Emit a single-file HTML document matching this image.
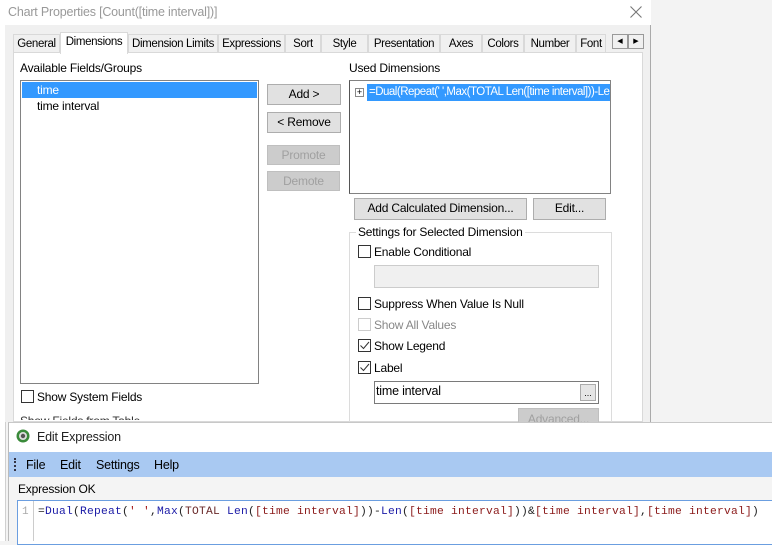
<!DOCTYPE html>
<html><head><meta charset="utf-8"><style>
*{box-sizing:border-box;margin:0;padding:0}
body{width:772px;height:541px;overflow:hidden;background:#f3f3f3;font-family:"Liberation Sans",sans-serif;font-size:12px;color:#000;position:relative}
.a{position:absolute}
.btn{position:absolute;background:#e1e1e1;border:1px solid #adadad;text-align:center;line-height:19px;font-size:12px;letter-spacing:-0.2px;white-space:nowrap}
.dis{color:#a0a0a0;background:#cccccc;border-color:#bfbfbf}
.cb{position:absolute;width:13px;height:13px;border:1px solid #333;background:#fff}
.tab{position:absolute;top:34px;height:19px;border:1px solid #d9d9d9;border-bottom:none;background:#f0f0f0;line-height:18px;text-align:center;font-size:11.5px;letter-spacing:-0.35px;white-space:nowrap;overflow:hidden}
.lbl{position:absolute;font-size:12px;white-space:nowrap;letter-spacing:-0.2px}
</style></head><body>
<div class="a" style="left:0;top:0;width:6px;height:541px;background:#fff;border-right:1px solid #d0d0d0"></div>
<div class="a" style="left:5px;top:0;width:646px;height:422px;background:#f0f0f0;border-right:1px solid #aaa"></div>
<div class="a" style="left:5px;top:0;width:646px;height:25px;background:#fff"></div>
<div class="lbl" style="left:8px;top:5px;color:#999;font-size:12.5px">Chart Properties [Count([time interval])]</div>
<svg class="a" style="left:630px;top:6px" width="12" height="12"><path d="M0.5 0.5L11.5 11.5M11.5 0.5L0.5 11.5" stroke="#777" stroke-width="1.1"/></svg>
<div class="tab" style="left:13px;width:47px">General</div>
<div class="tab" style="left:128px;width:90px">Dimension Limits</div>
<div class="tab" style="left:218px;width:67px">Expressions</div>
<div class="tab" style="left:285px;width:36px">Sort</div>
<div class="tab" style="left:321px;width:47px">Style</div>
<div class="tab" style="left:368px;width:72px">Presentation</div>
<div class="tab" style="left:440px;width:42px">Axes</div>
<div class="tab" style="left:482px;width:42px">Colors</div>
<div class="tab" style="left:524px;width:52px">Number</div>
<div class="tab" style="left:576px;width:30px">Font</div>
<div class="a" style="left:612px;top:34px;width:16px;height:15px;border:1px solid #999;background:#f0f0f0;font-size:7px;text-align:center;line-height:13px">◀</div>
<div class="a" style="left:628px;top:34px;width:16px;height:15px;border:1px solid #999;background:#f0f0f0;font-size:7px;text-align:center;line-height:13px">▶</div>
<div class="a" style="left:13px;top:52px;width:630px;height:370px;background:#fff;border:1px solid #d9d9d9"></div>
<div class="tab" style="left:60px;top:32px;width:68px;height:22px;background:#fff;border-color:#d9d9d9;line-height:19px">Dimensions</div>
<div class="lbl" style="left:20px;top:61px">Available Fields/Groups</div>
<div class="a" style="left:20px;top:80px;width:239px;height:304px;border:1px solid #828282;background:#fff"></div>
<div class="a" style="left:22px;top:82px;width:235px;height:16px;background:#3399ff"></div>
<div class="lbl" style="left:37px;top:83px;color:#fff">time</div>
<div class="lbl" style="left:37px;top:99px">time interval</div>
<div class="btn" style="left:267px;top:84px;width:74px;height:21px">Add &gt;</div>
<div class="btn" style="left:267px;top:112px;width:74px;height:21px">&lt; Remove</div>
<div class="btn dis" style="left:267px;top:145px;width:73px;height:20px">Promote</div>
<div class="btn dis" style="left:267px;top:171px;width:73px;height:20px">Demote</div>
<div class="cb" style="left:21px;top:390px"></div>
<div class="lbl" style="left:37px;top:390px">Show System Fields</div>
<div class="lbl" style="left:20px;top:414px;color:#333;height:6px;overflow:hidden">Show Fields from Table</div>
<div class="lbl" style="left:349px;top:61px">Used Dimensions</div>
<div class="a" style="left:349px;top:80px;width:262px;height:114px;border:1px solid #828282;border-left-color:#555;background:#fff"></div>
<div class="a" style="left:355px;top:88px;width:9px;height:9px;border:1px solid #888;font-size:9px;line-height:7px;text-align:center">+</div>
<div class="a" style="left:367px;top:84px;width:243px;height:17px;background:#3399ff;color:#fff;white-space:nowrap;overflow:hidden;line-height:17px;font-size:11.5px;letter-spacing:-0.5px;padding-left:2px">=Dual(Repeat(' ',Max(TOTAL Len([time interval]))-Len</div>
<div class="btn" style="left:354px;top:198px;width:173px;height:22px">Add Calculated Dimension...</div>
<div class="btn" style="left:533px;top:198px;width:73px;height:22px">Edit...</div>
<div class="a" style="left:349px;top:232px;width:263px;height:195px;border:1px solid #dcdcdc"></div>
<div class="lbl" style="left:356px;top:225px;background:#fff;padding:0 2px">Settings for Selected Dimension</div>
<div class="cb" style="left:358px;top:245px"></div><div class="lbl" style="left:374px;top:245px">Enable Conditional</div>
<div class="a" style="left:374px;top:265px;width:225px;height:23px;background:#f0f0f0;border:1px solid #ccc"></div>
<div class="cb" style="left:358px;top:297px"></div><div class="lbl" style="left:374px;top:297px">Suppress When Value Is Null</div>
<div class="cb" style="left:358px;top:318px;border-color:#ccc"></div><div class="lbl" style="left:374px;top:318px;color:#888">Show All Values</div>
<div class="cb" style="left:358px;top:339px"><svg width="11" height="11" style="position:absolute;left:0;top:0"><path d="M1.5 5.5L4.5 8.5L10 2" stroke="#333" stroke-width="1" fill="none"/></svg></div><div class="lbl" style="left:374px;top:339px">Show Legend</div>
<div class="cb" style="left:358px;top:361px"><svg width="11" height="11" style="position:absolute;left:0;top:0"><path d="M1.5 5.5L4.5 8.5L10 2" stroke="#333" stroke-width="1" fill="none"/></svg></div><div class="lbl" style="left:374px;top:361px">Label</div>
<div class="a" style="left:374px;top:381px;width:225px;height:23px;border:1px solid #7a7a7a;background:#fff"></div>
<div class="lbl" style="left:376px;top:384px;font-size:12.5px">time interval</div>
<div class="a" style="left:580px;top:384px;width:16px;height:17px;border:1px solid #aaa;background:#e5e5e5;font-size:9px;text-align:center;line-height:17px">...</div>
<div class="btn dis" style="left:518px;top:408px;width:81px;height:20px;line-height:20px">Advanced...</div>
<div class="a" style="left:8px;top:422px;width:764px;height:119px;background:#f4f4f4;border-top:1px solid #c8c8c8;border-left:1px solid #bbb"></div>
<div class="a" style="left:9px;top:423px;width:763px;height:29px;background:#fff"></div>
<svg class="a" style="left:16px;top:429px" width="14" height="14"><circle cx="7" cy="7" r="6.5" fill="#3a8a3a"/><circle cx="7" cy="7" r="4" fill="#ddd"/><circle cx="7" cy="7" r="2.2" fill="#555"/></svg>
<div class="lbl" style="left:37px;top:430px;font-size:12.5px;color:#222">Edit Expression</div>
<div class="a" style="left:9px;top:452px;width:763px;height:25px;background:#a9c9f2"></div>
<div class="a" style="left:14px;top:458px;width:2px;height:13px;border-left:2px dotted #334"></div>
<div class="lbl" style="left:26px;top:458px;font-size:12.5px">File</div>
<div class="lbl" style="left:60px;top:458px;font-size:12.5px">Edit</div>
<div class="lbl" style="left:96px;top:458px;font-size:12.5px">Settings</div>
<div class="lbl" style="left:154px;top:458px;font-size:12.5px">Help</div>
<div class="lbl" style="left:18px;top:482px;font-size:12px">Expression OK</div>
<div class="a" style="left:17px;top:500px;width:760px;height:45px;background:#fff;border:1px solid #6b9ee0"></div>
<div class="a" style="left:33px;top:501px;width:1px;height:40px;background:#ccc"></div>
<div class="lbl" style="left:22px;top:506px;color:#aaa;font-family:'Liberation Mono',monospace;font-size:11px;letter-spacing:0">1</div>
<div class="lbl" style="left:38px;top:506px;font-family:'Liberation Mono',monospace;font-size:11.3px;letter-spacing:0.22px;color:#222">=<span style="color:#1a1aa6">Dual</span>(<span style="color:#1a1aa6">Repeat</span>(<span style="color:#a31515">' '</span>,<span style="color:#1a1aa6">Max</span>(<span style="color:#6a2a2a">TOTAL</span> <span style="color:#1a1aa6">Len</span>(<span style="color:#8b1a1a">[time interval]</span>))-<span style="color:#1a1aa6">Len</span>(<span style="color:#8b1a1a">[time interval]</span>))&amp;<span style="color:#8b1a1a">[time interval]</span>,<span style="color:#8b1a1a">[time interval]</span>)</div>
</body></html>
